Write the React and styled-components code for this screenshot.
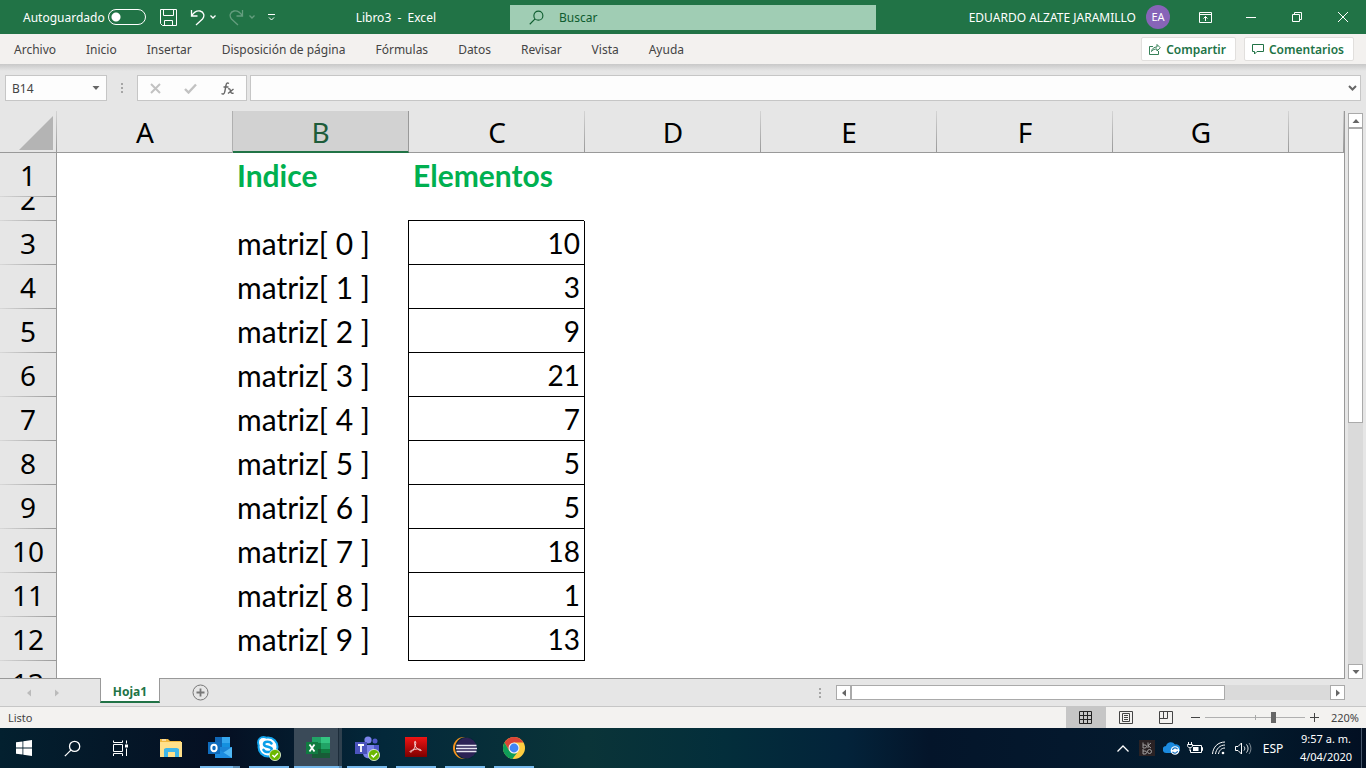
import React, { useState } from 'react';
import styled, { createGlobalStyle, css } from 'styled-components'
// *******************
// styled components
// *******************
const ui = `"Noto Sans", "Open Sans", sans-serif`
const Global = createGlobalStyle`
    * { box-sizing: border-box; }
    body { margin: 0; }
    button, input { font: inherit; color: inherit; }
    svg { display: block; flex: none; }
`
const Window = styled.div`
    height: 100vh;
    display: flex;
    flex-direction: column;
    overflow: hidden;
    font-family: ${ui};
    font-size: 12px;
    color: #444;
    background: #e6e6e6;
`
const Plain = styled.button`
    display: flex;
    align-items: center;
    justify-content: center;
    padding: 0;
    border: 0;
    background: none;
`
// title bar
const TitleBar = styled.header`
    flex: none;
    height: 34px;
    display: grid;
    grid-template-columns: 51fr 366px 49fr;
    align-items: center;
    background: #217346;
    color: #fff;
`
const Quick = styled.div`
    display: flex;
    align-items: center;
    padding-left: 23px;
`
const AutoSave = styled.label`
    display: flex;
    align-items: center;
    gap: 3px;
`
const Toggle = styled.input`
    appearance: none;
    width: 38px;
    height: 16px;
    margin: 0 14px 0 0;
    border: 1px solid #fff;
    border-radius: 8px;
    background: radial-gradient(circle at 7px 7px, #fff 4px, transparent 5px);
    &:checked {
        background: radial-gradient(circle at 29px 7px, #fff 4px, transparent 5px);
    }
`
const QuickIcons = styled.div`
    display: flex;
    align-items: center;
    gap: 13px;
`
const QuickPair = styled(Plain)`
    gap: 5px;
    opacity: ${p => p.$off ? 0.3 : 1};
`
const DocName = styled.span`
    margin-left: auto;
    padding-right: 74px;
    white-space: pre;
`
const SearchBox = styled.label`
    height: 25px;
    display: flex;
    align-items: center;
    gap: 15px;
    padding-left: 19px;
    background: #a0cdb4;
    color: #0e5c2f;
    input {
        flex: 1;
        border: 0;
        padding: 0;
        outline: none;
        background: none;
    }
    input::placeholder { color: #0e5c2f; opacity: 1; }
`
const Account = styled.div`
    display: flex;
    align-items: center;
    justify-content: flex-end;
    white-space: nowrap;
`
const Avatar = styled.span`
    width: 24px;
    height: 24px;
    margin: 0 12px 0 10px;
    border-radius: 50%;
    background: #8764b8;
    font-size: 11px;
    line-height: 24px;
    text-align: center;
`
const WinButton = styled(Plain)`
    width: 46px;
    height: 34px;
`
// ribbon
const Ribbon = styled.nav`
    flex: none;
    height: 30px;
    display: flex;
    align-items: center;
    justify-content: space-between;
    padding: 0 12px 0 14px;
    background: #f3f1ef;
`
const Tabs = styled.div`
    display: flex;
    gap: 30px;
`
const Tab = styled(Plain)`
    height: 30px;
    font-size: 12px;
`
const Actions = styled.div`
    display: flex;
    gap: 8px;
`
const Action = styled(Plain)`
    height: 24px;
    gap: 5px;
    padding: 0 9px 0 7px;
    border: 1px solid #e1dfdd;
    border-radius: 2px;
    background: #fff;
    color: #217346;
    font-weight: 600;
`
// formula bar
const FormulaBar = styled.div`
    flex: none;
    height: 47px;
    display: flex;
    align-items: flex-start;
    padding: 11px 5px 0;
    background: linear-gradient(#c8c8c8, #e6e6e6 7px);
`
const box = css`
    height: 26px;
    border: 1px solid #c6c6c6;
    background: #fdfdfd;
`
const NameBox = styled.label`
    ${box}
    width: 102px;
    display: flex;
    align-items: center;
    padding: 0 6px;
    input {
        width: 100%;
        min-width: 0;
        padding: 0;
        border: 0;
        outline: none;
        background: none;
    }
`
const Grip = styled.span`
    width: 2px;
    height: 10px;
    margin: ${p => p.$margin};
    background: repeating-linear-gradient(#a6a6a6 0 2px, transparent 2px 4px);
`
const FxBox = styled.div`
    ${box}
    width: 110px;
    display: flex;
    justify-content: space-around;
    align-items: center;
`
const FormulaInput = styled.div`
    ${box}
    flex: 1;
    display: flex;
    margin-left: 3px;
    padding-right: 3px;
    input {
        flex: 1;
        padding: 0 6px;
        border: 0;
        outline: none;
        background: none;
    }
`
// sheet
const Body = styled.main`
    flex: 1;
    min-height: 0;
    display: flex;
`
const SheetArea = styled.div`
    flex: 1;
    min-width: 0;
    overflow: hidden;
    border-right: 1px solid #999;
    border-bottom: 1px solid #999;
    background: #fff;
`
const Sheet = styled.table`
    width: 100%;
    table-layout: fixed;
    border-collapse: separate;
    border-spacing: 0;
    color: #000;
    td, th { padding: 0; font-weight: 400; }
`
const Col = styled.col`
    width: ${p => p.$w};
`
const ColHead = styled.th`
    height: 42px;
    border-bottom: 1px solid #999;
    background: linear-gradient(#d4d4d4, #999) right / 1px 100% no-repeat #e6e6e6;
    font-size: 28px;
    line-height: 39px;
    && { padding-top: 2px; }
    ${p => p.$active && css`
        border-bottom: 2px solid #217346;
        background: #d2d2d2;
        color: #1e5c3a;
        border-right: 1px solid #999;
        box-shadow: -1px 0 0 #b0b0b0;
        line-height: 38px;
    `}
`
const Corner = styled(ColHead)`
    svg { margin-left: 19px; }
`
const RowHead = styled.th`
    border-right: 1px solid #999;
    background: linear-gradient(90deg, #d8d8d8, #999) bottom / 100% 1px no-repeat #e6e6e6;
    font-size: 28px;
    div {
        height: ${p => p.$h}px;
        display: flex;
        align-items: flex-end;
        justify-content: center;
        overflow: hidden;
        line-height: 42px;
        padding-bottom: 1px;
    }
`
const Cell = styled.td`
    font-family: Lato, Carlito, sans-serif;
    font-size: 30px;
    line-height: 34px;
    white-space: pre;
`
const TextCell = styled(Cell)`
    && { padding-left: 4px; }
`
const TitleCell = styled(TextCell)`
    color: #00b050;
    && { font-weight: 700; }
`
const ValueCell = styled(TextCell)`
    && { padding-right: 4px; }
    border-right: 1px solid #000;
    border-bottom: 1px solid #000;
    box-shadow: -1px 0 0 #000, -1px -1px 0 #000;
    font-size: 28px;
    text-align: right;
`
// scrollbars
const VScroll = styled.div`
    width: 21px;
    display: flex;
    flex-direction: column;
    padding: 2px 3px 0;
`
const HScroll = styled.div`
    width: 509px;
    height: 15px;
    display: flex;
`
const ScrollButton = styled(Plain)`
    width: 15px;
    height: 15px;
    flex: none;
    border: 1px solid #aaa;
    background: #fff;
`
const Track = styled.div`
    flex: 1;
    display: flex;
    flex-direction: ${p => p.$row ? 'row' : 'column'};
    background: #dadada;
`
const Thumb = styled.div`
    flex: 0 0 ${p => p.$size};
    border: 1px solid #aaa;
    background: #fff;
`
const SheetBar = styled.div`
    flex: none;
    height: 27px;
    display: flex;
    align-items: center;
    padding-right: 21px;
`
const SheetNav = styled.div`
    width: 100px;
    display: flex;
    gap: 20px;
    padding-left: 25px;
`
const SheetTab = styled(Plain)`
    align-self: flex-start;
    width: 60px;
    height: 25px;
    margin-top: -1px;
    padding-top: 3px;
    border: solid #999;
    border-width: 0 1px;
    border-bottom: 2px solid #217346;
    background: #fff;
    color: #217346;
    font-weight: 700;
`
const AddSheet = styled(Plain)`
    margin-left: 32px;
    margin-right: auto;
`
const StatusBar = styled.footer`
    flex: none;
    height: 22px;
    display: flex;
    align-items: center;
    border-top: 1px solid #c6c6c6;
    padding: 0 7px 0 8px;
    background: #f3f2f0;
    font-size: 11px;
    line-height: 16px;
`
const ViewButton = styled(Plain)`
    width: 40px;
    height: 21px;
    background: ${p => p.$on ? '#c6c6c6' : 'none'};
`
const Spacer = styled.div`
    flex: 1;
`
const Zoom = styled.div`
    display: flex;
    align-items: center;
    gap: 5px;
    margin: 0 12px 0 5px;
    input {
        appearance: none;
        width: 100px;
        height: 12px;
        margin: 0;
        background:
            linear-gradient(#a8a8a8, #a8a8a8) 50px 50% / 1px 5px no-repeat,
            linear-gradient(#b0b0b0, #b0b0b0) center / 100% 1px no-repeat;
    }
    input::-webkit-slider-thumb {
        appearance: none;
        width: 5px;
        height: 11px;
        background: #666;
    }
`
// taskbar
const TaskBar = styled.nav`
    flex: none;
    height: 40px;
    display: flex;
    color: #fff;
    background: linear-gradient(90deg, #03202f 0%, #050f22 16%, #03283a 28%, #0a3438 43%, #032e3b 53%, #03233a 62%, #04152a 68%, #04182d 78%, #031c2e 90%, #020f22 100%);
`
const TaskButton = styled(Plain)`
    width: 48px;
    height: 40px;
`
const Apps = styled.div`
    display: flex;
    gap: 1px;
    margin-left: 3px;
`
const AppButton = styled(TaskButton)`
    ${p => p.$open && css`
        background: linear-gradient(#76b9ed, #76b9ed) bottom / 40px 2px no-repeat;
    `}
    ${p => p.$stack && css`
        background: linear-gradient(90deg, #76b9ed 33px, #5a8cb4 33px) bottom / 40px 2px no-repeat;
    `}
    ${p => p.$active && css`
        background:
            linear-gradient(90deg, #76b9ed 45px, #5a8cb4 45px) bottom / 100% 2px no-repeat,
            linear-gradient(90deg, #3a4a58 44px, #1c2c3a 44px 45px, #2e404e 45px);
    `}
`
const Tray = styled.div`
    display: flex;
    align-items: center;
    margin-left: auto;
    padding-right: 4px;
`
const TrayButton = styled(Plain)`
    width: 24px;
    height: 40px;
`
const Lang = styled(Plain)`
    width: 36px;
    height: 40px;
`
const Clock = styled(Plain)`
    width: 71px;
    height: 40px;
    line-height: 18px;
    font-size: 11px;
    border-right: 1px solid #46566a;
`

// *******************
// iconos
// *******************
const Svg = ({ w = 16, h = w, box, children, ...rest }) => (
    <svg width={w} height={h} viewBox={box || `0 0 ${w} ${h}`} fill="none" stroke="currentColor" aria-hidden="true" {...rest}>
        {children}
    </svg>
)
const SaveIcon = () => <Svg w={17}><path d="M.5.5h16v16h-14l-2-2zM3.500.5v6h10v-6M4.500 16.500v-5h8v5" /></Svg>
const UndoIcon = () => <Svg w={15} h={17} strokeWidth="1.3"><path d="M1.500 1v6h6M1.500 7C4 3 7 1.500 10 2c4 1 5 5 2.500 8L6 16" /></Svg>
const RedoIcon = () => <Svg w={15} h={17} strokeWidth="1.3"><path d="M13.500 1v6h-6M13.500 7C11 3 8 1.500 5 2 1 3 0 7 2.500 10L9 16" /></Svg>
const Chevron = ({ w = 6 }) => <Svg w={w} h={4} box="0 0 6 4" strokeWidth="1.3"><path d="M.5.5 3 3 5.500.5" /></Svg>
const MoreIcon = () => <Svg w={7} h={7}><path d="M0 .5h7M1 3.500 3.500 6 6 3.500" /></Svg>
const SearchIcon = ({ w }) => <Svg w={w} box="0 0 16 16" strokeWidth="1.2"><circle cx="10" cy="6" r="4.800" /><path d="M6.500 9.500.8 15.200" /></Svg>
const RibbonIcon = () => <Svg w={13} h={11}><path d="M.5.5h12v10H.5zM.5 2.500h12M6.500 9V4.500M4.500 6.500l2-2 2 2" /></Svg>
const ShareIcon = () => <Svg w={12} h={12}><path d="M4 3.500H.5v8h9V8M2.500 8.500C3 5.500 5 4 8 4V1.500l3.300 3.300L8 8V6C5.500 6 4 6.500 2.500 8.500z" strokeWidth=".9" /></Svg>
const CommentIcon = () => <Svg w={12} h={11}><path d="M.5.5h11v7H5l-2.500 2.500V7.500h-2z" /></Svg>
const Arrow = ({ dir, color = '#666' }) => {
    const turn = { up: 0, right: 90, down: 180, left: 270 }[dir]
    return <Svg w={8} stroke="none"><path d="M.5 6 4 2l3.500 4z" fill={color} transform={`rotate(${turn} 4 4)`} /></Svg>
}
const Badge = ({ x, y }) => (
    <g stroke="none">
        <circle cx={x} cy={y} r="5.600" fill="#6bb700" stroke="#e8f5d8" strokeWidth=".8" />
        <path d={`M${x - 2.6} ${y}l2 2 3.500-3.700`} fill="none" stroke="#fff" strokeWidth="1.500" />
    </g>
)
const ExplorerIcon = () => (
    <Svg w={24} stroke="none">
        <path d="M1 3h8l2 2h11v15H1z" fill="#f0b83f" /><path d="M1 6h22v15H1z" fill="#ffe08a" />
        <path d="M3 3.500h4v1H3z" fill="#fff" />
        <path d="M5 21v-8l2-1h11l2 1v8h-4v-5H9v5z" fill="#3fb6e8" />
    </Svg>
)
const OutlookIcon = () => (
    <Svg w={26} stroke="none">
        <path d="M8 2h15v14H8z" fill="#1066b5" /><path d="M15 2h8v6h-8z" fill="#35a7ee" /><path d="M15 8h8v5h-8z" fill="#1490df" />
        <path d="M8 12h17v11H8z" fill="#1a84d6" /><path d="M8 23l17-11v11z" fill="#50b8f4" /><path d="M8 12l17 11H8z" fill="#1c8ce0" />
        <path d="M1 7h12v12H1z" fill="#0f6cbd" /><ellipse cx="7" cy="13" rx="2.700" ry="3.200" fill="none" stroke="#fff" strokeWidth="1.900" />
    </Svg>
)
const SkypeIcon = () => (
    <Svg w={26} stroke="none">
        <g fill="#fff" stroke="#12a5ee" strokeWidth="2"><circle cx="7.500" cy="7.500" r="5.500" /><circle cx="15.500" cy="16" r="5.500" /><circle cx="12" cy="12" r="9.500" /></g>
        <g fill="#fff"><circle cx="7.500" cy="7.500" r="4.500" /><circle cx="15.500" cy="16" r="4.500" /></g>
        <path d="M15.500 8.500C14 6 8 6 8 9.200c0 3.500 7.800 1.800 7.800 5.200 0 3.400-6.600 3.400-8.300.4" fill="none" stroke="#0c9fe8" strokeWidth="2.600" strokeLinecap="round" />
        <Badge x={19} y={20} />
    </Svg>
)
const ExcelIcon = () => (
    <Svg w={26} stroke="none">
        <path d="M7 2h18v21H7z" fill="#185c37" /><path d="M7 2h9v6H7z" fill="#21a366" /><path d="M16 2h9v6h-9z" fill="#33c481" />
        <path d="M7 8h9v6H7z" fill="#107c41" /><path d="M16 8h9v6h-9z" fill="#21a366" /><path d="M16 14h9v4h-9z" fill="#107c41" />
        <path d="M1 7h12v12H1z" fill="#107c41" /><path d="m4.500 9.500 5 7m0-7-5 7" fill="none" stroke="#fff" strokeWidth="1.800" />
    </Svg>
)
const TeamsIcon = () => (
    <Svg w={26} stroke="none">
        <circle cx="21" cy="6" r="2.500" fill="#5059c9" /><circle cx="14" cy="5" r="3.600" fill="#7b83eb" />
        <path d="M17 10h8v6c0 3-3 5-6 4z" fill="#5059c9" /><path d="M9 10h11v8c0 7-11 7-11 0z" fill="#7b83eb" />
        <path d="M1 7h12v12H1z" fill="#4b53bc" /><path d="M4 10h6M7 10v7" fill="none" stroke="#fff" strokeWidth="1.800" />
        <Badge x={20} y={20} />
    </Svg>
)
const AcrobatIcon = () => (
    <Svg w={22} stroke="none">
        <defs>
            <linearGradient id="acro" x2="0" y2="1"><stop stopColor="#f01414" /><stop offset="1" stopColor="#7c0000" /></linearGradient>
        </defs>
        <path d="M0 0h22v20H0z" fill="url(#acro)" />
        <path d="M9.800 4.500c1.300-1 1.400 2.500-.3 6.300s-4 5-4.500 4 4.500-2.800 7.500-2.800 4.700 1.500 3.300 1.600-5.300-2.800-6.100-6.100c-.3-1.500-.3-2.600.1-3z" fill="none" stroke="#f6dada" strokeWidth="1" />
    </Svg>
)
const EclipseIcon = () => (
    <Svg w={26} stroke="none">
        <circle cx="12" cy="13" r="11" fill="#f7941e" /><circle cx="14" cy="13" r="11" fill="#04263a" /><circle cx="14.500" cy="13" r="10.300" fill="#2c2255" />
        <path d="M4.500 10.500h20M4 13.500h21M4.500 16.500h20" stroke="#e8e6f2" strokeWidth="1.500" />
    </Svg>
)
const ChromeIcon = () => (
    <Svg w={24} stroke="none">
        <circle cx="12" cy="12" r="11" fill="#ffcd40" />
        <path d="M2.500 6.500A11 11 0 0 1 21.500 6.500H12L7.200 14.700z" fill="#db4437" />
        <path d="M2.500 6.500 7.200 14.700 12 17.500l3-.5-4.700 6A11 11 0 0 1 2.500 6.500z" fill="#0f9d58" />
        <circle cx="12" cy="12" r="5.500" fill="#f1f1f1" /><circle cx="12" cy="12" r="4.400" fill="#4285f4" />
    </Svg>
)

// *******************
// datos
// *******************
const tabs = ['Archivo', 'Inicio', 'Insertar', 'Disposición de página', 'Fórmulas', 'Datos', 'Revisar', 'Vista', 'Ayuda']
const columns = ['A', 'B', 'C', 'D', 'E', 'F', 'G']
const elements = [10, 3, 9, 21, 7, 5, 5, 18, 1, 13]
const apps = [
    { name: 'Explorador', Icon: ExplorerIcon },
    { name: 'Outlook', Icon: OutlookIcon, open: true, stack: true },
    { name: 'Skype', Icon: SkypeIcon, open: true },
    { name: 'Excel', Icon: ExcelIcon, open: true, active: true },
    { name: 'Teams', Icon: TeamsIcon, open: true },
    { name: 'Acrobat', Icon: AcrobatIcon, open: true },
    { name: 'Eclipse', Icon: EclipseIcon, open: true },
    { name: 'Chrome', Icon: ChromeIcon, open: true },
]

const Grid = () => (
    <Sheet>
        <colgroup>
            <Col $w="57px" />
            {columns.map(c => <Col key={c} $w="176px" />)}
            <Col $w="auto" />
        </colgroup>
        <thead>
            <tr>
                <Corner aria-label="Seleccionar todo">
                    <Svg w={34} stroke="none"><path d="M34 0v34H0z" fill="#b4b4b4" /></Svg>
                </Corner>
                {columns.map(c => <ColHead key={c} scope="col" $active={c === 'B'}>{c}</ColHead>)}
                <ColHead />
            </tr>
        </thead>
        <tbody>
            <tr>
                <RowHead scope="row" $h={44}><div>1</div></RowHead>
                <Cell />
                <TitleCell>Indice</TitleCell>
                <TitleCell>Elementos</TitleCell>
                <Cell colSpan={5} />
            </tr>
            <tr>
                <RowHead scope="row" $h={24}><div>2</div></RowHead>
                <Cell colSpan={8} />
            </tr>
            {elements.map((value, i) => (
                <tr key={i}>
                    <RowHead scope="row" $h={44}><div>{i + 3}</div></RowHead>
                    <Cell />
                    <TextCell>{`matriz[ ${i} ]`}</TextCell>
                    <ValueCell>{value}</ValueCell>
                    <Cell colSpan={5} />
                </tr>
            ))}
            <tr>
                <RowHead scope="row" $h={44}><div>13</div></RowHead>
                <Cell colSpan={8} />
            </tr>
        </tbody>
    </Sheet>
)

const App = () => {
const [auto, setAuto] = useState(false)
const [cell, setCell] = useState("B14")
const [zoom, setZoom] = useState(70)
    return (
        <Window>
            <Global />
            <TitleBar>
                <Quick>
                    <AutoSave>
                        Autoguardado
                        <Toggle type="checkbox" checked={auto} onChange={e => setAuto(e.target.checked)} />
                    </AutoSave>
                    <QuickIcons>
                        <Plain aria-label="Guardar"><SaveIcon /></Plain>
                        <QuickPair aria-label="Deshacer"><UndoIcon /><Chevron /></QuickPair>
                        <QuickPair aria-label="Rehacer" $off><RedoIcon /><Chevron /></QuickPair>
                        <Plain aria-label="Personalizar"><MoreIcon /></Plain>
                    </QuickIcons>
                    <DocName>Libro3  -  Excel</DocName>
                </Quick>
                <SearchBox>
                    <SearchIcon w={15} />
                    <input type="search" aria-label="Buscar" placeholder="Buscar" />
                </SearchBox>
                <Account>
                    EDUARDO ALZATE JARAMILLO
                    <Avatar>EA</Avatar>
                    <WinButton aria-label="Cinta"><RibbonIcon /></WinButton>
                    <WinButton aria-label="Minimizar"><Svg w={10} h={1}><path d="M0 .5h10" /></Svg></WinButton>
                    <WinButton aria-label="Restaurar"><Svg w={10}><path d="M.5 2.500h7v7h-7zM2.500 2.500v-2h7v7h-2" /></Svg></WinButton>
                    <WinButton aria-label="Cerrar"><Svg w={10}><path d="m0 0 10 10M10 0 0 10" /></Svg></WinButton>
                </Account>
            </TitleBar>
            <Ribbon>
                <Tabs>
                    {tabs.map(t => <Tab key={t}>{t}</Tab>)}
                </Tabs>
                <Actions>
                    <Action><ShareIcon />Compartir</Action>
                    <Action><CommentIcon />Comentarios</Action>
                </Actions>
            </Ribbon>
            <FormulaBar>
                <NameBox>
                    <input aria-label="Cuadro de nombres" value={cell} onChange={e => setCell(e.target.value)} />
                    <Arrow dir="down" />
                </NameBox>
                <Grip $margin="8px 14px" />
                <FxBox>
                    <Plain aria-label="Cancelar"><Svg w={11} stroke="#c2c2c2" strokeWidth="2"><path d="m1 1 9 9M10 1 1 10" /></Svg></Plain>
                    <Plain aria-label="Introducir"><Svg w={13} h={11} stroke="#c2c2c2" strokeWidth="2.400"><path d="m1 6 3.500 3.500L12 1.500" /></Svg></Plain>
                    <Plain aria-label="Insertar función">
                        <Svg w={13} h={13} stroke="#666" strokeWidth="1.400"><path d="M8 1.500C6 .3 5.300 1.500 5 3.500L3.800 9.500C3.500 12 2 12.500.5 11.500M2.500 5h5M7 7c1.500-.8 2 .2 2.500 2s1 3 3 2M12.500 7 7 11.500" /></Svg>
                    </Plain>
                </FxBox>
                <FormulaInput>
                    <input aria-label="Barra de fórmulas" />
                    <Plain aria-label="Expandir"><Svg w={9} h={6} stroke="#666" strokeWidth="2"><path d="m1 1 3.500 3.500L8 1" /></Svg></Plain>
                </FormulaInput>
            </FormulaBar>
            <Body>
                <SheetArea><Grid /></SheetArea>
                <VScroll>
                    <ScrollButton aria-label="Subir"><Arrow dir="up" /></ScrollButton>
                    <Track><Thumb $size="55%" /></Track>
                    <ScrollButton aria-label="Bajar"><Arrow dir="down" /></ScrollButton>
                </VScroll>
            </Body>
            <SheetBar>
                <SheetNav>
                    <Arrow dir="left" color="#bbb" />
                    <Arrow dir="right" color="#bbb" />
                </SheetNav>
                <SheetTab>Hoja1</SheetTab>
                <AddSheet aria-label="Hoja nueva">
                    <Svg w={17} stroke="#777"><circle cx="8.500" cy="8.500" r="7.500" /><path d="M4.500 8.500h8M8.500 4.500v8" strokeWidth="1.800" /></Svg>
                </AddSheet>
                <Grip $margin="0 15px 0 0" />
                <HScroll>
                    <ScrollButton aria-label="Izquierda"><Arrow dir="left" /></ScrollButton>
                    <Track $row><Thumb $size="78%" /></Track>
                    <ScrollButton aria-label="Derecha"><Arrow dir="right" /></ScrollButton>
                </HScroll>
            </SheetBar>
            <StatusBar>
                Listo
                <Spacer />
                <ViewButton $on aria-label="Normal"><Svg w={13} stroke="#222"><path d="M.5.5h12v12H.5zM4.500.5v12M8.500.5v12M.5 4.500h12M.5 8.500h12" /></Svg></ViewButton>
                <ViewButton aria-label="Diseño de página"><Svg w={14} h={13}><path d="M.5.5h13v12H.5zM3.500 2.500h7v8h-7zM5 4.500h4M5 6.500h4M5 8.500h4" /></Svg></ViewButton>
                <ViewButton aria-label="Saltos de página"><Svg w={14} h={13}><path d="M.5.5h13v12H.5zM.5 7.500h8v-7M4.500.5v7" /></Svg></ViewButton>
                <Zoom>
                    <Svg w={9}><path d="M0 4.500h9" /></Svg>
                    <input type="range" aria-label="Zoom" value={zoom} onChange={e => setZoom(Number(e.target.value))} />
                    <Svg w={9}><path d="M0 4.500h9M4.500 0v9" /></Svg>
                </Zoom>
                220%
            </StatusBar>
            <TaskBar>
                <TaskButton aria-label="Inicio"><Svg w={16} stroke="none"><path d="m0 2.300 6.500-.9v6.200H0zM7.300 1.300 16 0v7.600H7.300zM0 8.400h6.500v6.200L0 13.700zM7.300 8.400H16V16l-8.700-1.300z" fill="#fff" /></Svg></TaskButton>
                <TaskButton aria-label="Buscar"><SearchIcon w={17} /></TaskButton>
                <TaskButton aria-label="Vista de tareas"><Svg w={17}><path d="M1.500.5v2h9v-2M1.500 4.500h9v7h-9zM1.500 16v-2.500h9V16M14.500.5v3M14.500 8.500V16" /><path d="M13 4.500h3v3h-3z" fill="#fff" stroke="none" /></Svg></TaskButton>
                <Apps>
                    {apps.map(({ name, Icon, open, stack, active }) => (
                        <AppButton key={name} aria-label={name} $open={open} $stack={stack} $active={active}><Icon /></AppButton>
                    ))}
                </Apps>
                <Tray>
                    <TrayButton aria-label="Iconos ocultos"><Svg w={12} h={7} strokeWidth="1.300"><path d="m.5 6.500 5.500-5.500 5.500 5.500" /></Svg></TrayButton>
                    <TrayButton aria-label="B&O"><Svg w={16} stroke="none"><path d="M0 0h16v16H0z" fill="#2a2224" /><path d="M4 2.500V8h2a1.500 1.500 0 0 0 0-3H4M12 3 9 5.500 12 8M9 2.500V8M4 9v5h2a1.500 1.500 0 0 0 0-3H4" fill="none" stroke="#bbb" strokeWidth=".8" /><circle cx="10.500" cy="11.500" r="2" fill="none" stroke="#bbb" strokeWidth=".8" /></Svg></TrayButton>
                    <TrayButton aria-label="OneDrive"><Svg w={17} h={14} stroke="none"><path d="M3.500 12A3.500 3.500 0 0 1 3 5a5 5 0 0 1 9-1.500A4 4 0 0 1 14 12z" fill="#1b8be0" /><circle cx="12" cy="9.500" r="4.300" fill="#fff" /><path d="M9.500 9a2.700 2.700 0 0 1 5-.8M14.500 10a2.700 2.700 0 0 1-5 .8" fill="none" stroke="#0f6cbd" strokeWidth="1.200" /></Svg></TrayButton>
                    <TrayButton aria-label="Batería"><Svg w={16} h={13}><path d="M5 3.500h9.500v7h-11V8M14.500 5.500h1v3h-1M1.500 0v2M4.500 0v2M.5 2.500h5c0 3-1 3-2.500 3s-2.500 0-2.500-3zM3 5.500V9" /><path d="M6 5h5.500v4H6z" fill="#fff" stroke="none" /></Svg></TrayButton>
                    <TrayButton aria-label="Wi-Fi"><Svg w={14} h={14}><path d="M.5 13C1 6 6 1 13 1M3.500 13C4 8 8 4 13 4M6.500 13c.5-3.500 3-6 6.500-6" /><circle cx="11" cy="12" r="1.300" fill="#fff" stroke="none" /></Svg></TrayButton>
                    <TrayButton aria-label="Volumen"><Svg w={17} h={13}><path d="M.5 4.500H3l3.500-3.500v11L3 8.500H.5zM9 4.500c1 1 1 3 0 4M11.500 2.500c2 2.500 2 5.500 0 8" /><path d="M14 1c2.500 3.500 2.500 7.500 0 11" opacity=".5" /></Svg></TrayButton>
                    <Lang>ESP</Lang>
                    <Clock>9:57 a. m.<br />4/04/2020</Clock>
                </Tray>
            </TaskBar>
        </Window>
    );
}


export default App;
